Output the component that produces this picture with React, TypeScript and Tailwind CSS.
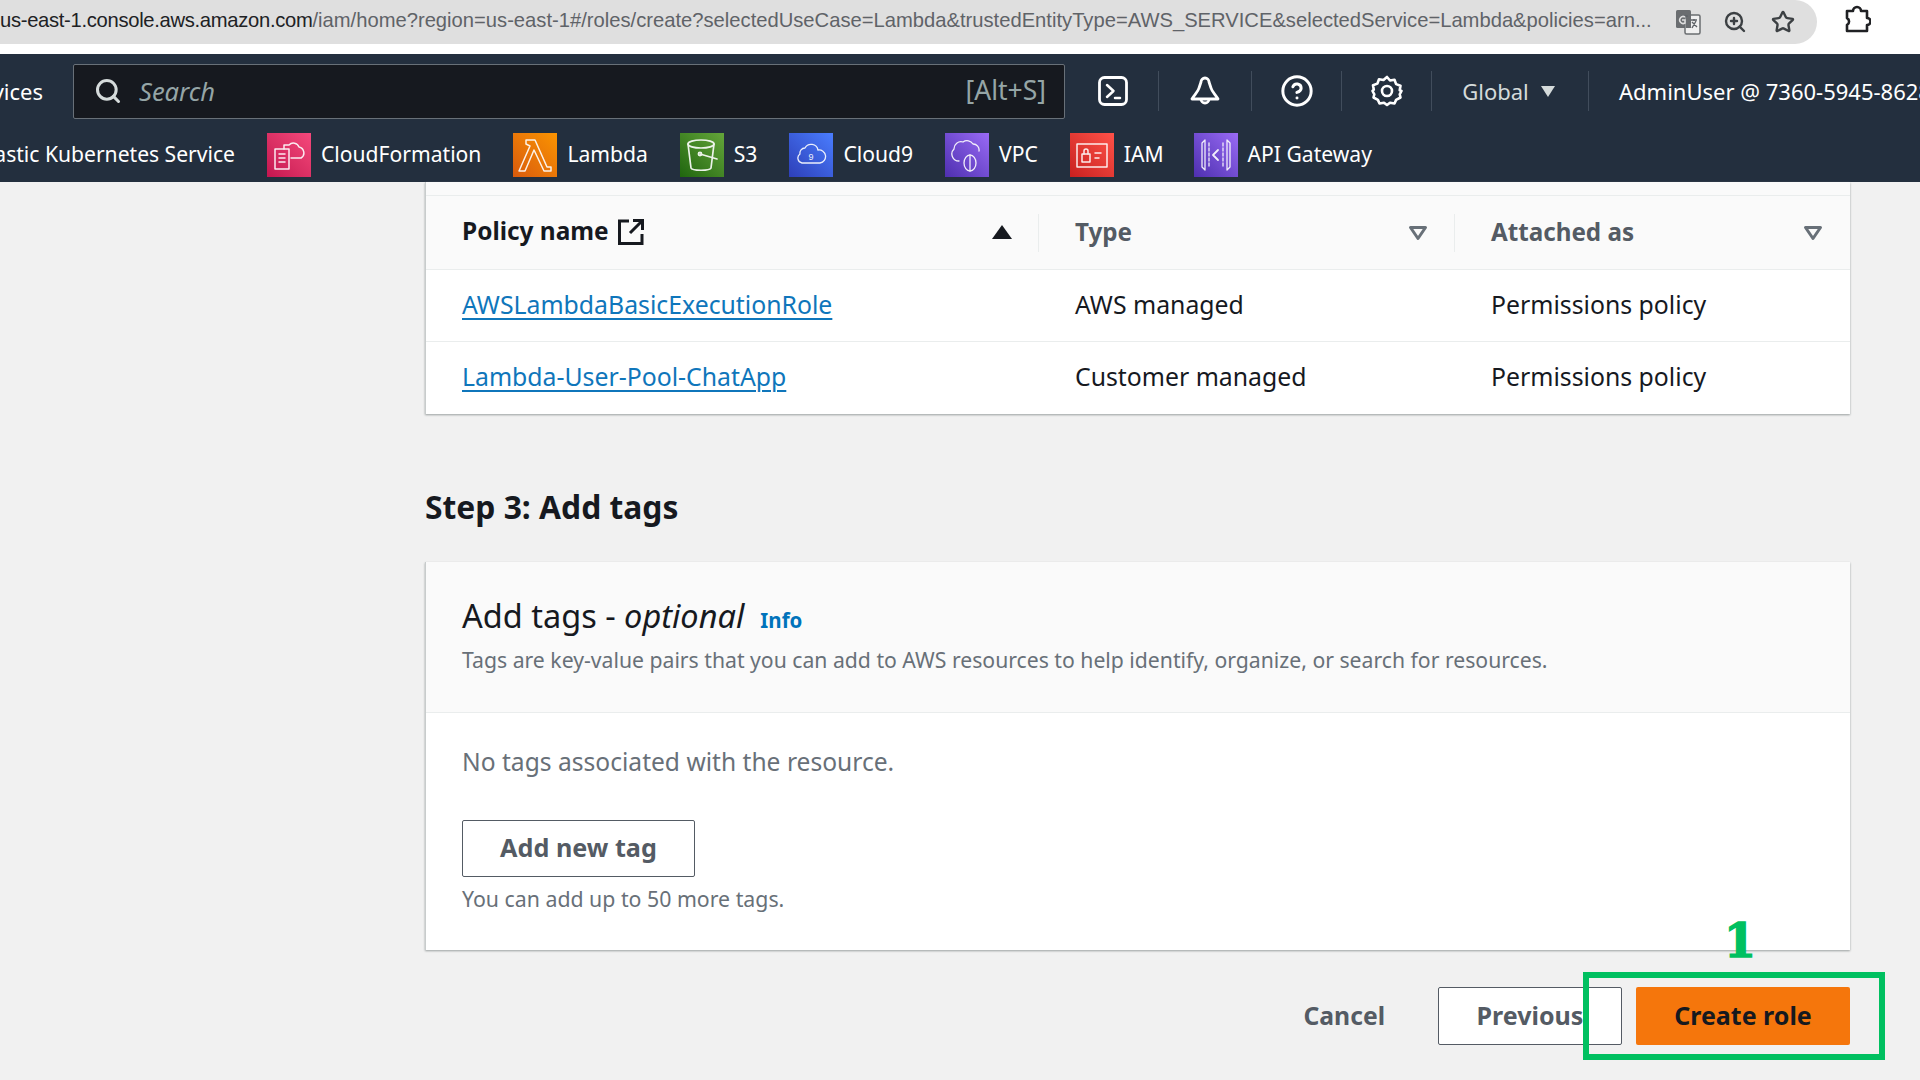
import React from 'react';
import { Search, Star, ZoomIn, CircleHelp } from 'lucide-react';

const services = [
  { name: 'CloudFormation', bg: 'bg-gradient-to-tr from-[#c4144f] to-[#f5487c]', icon: 'cf', gap: 'mr-[32px]' },
  { name: 'Lambda', bg: 'bg-gradient-to-tr from-[#d85a0c] to-[#fb9400]', icon: 'lambda', gap: 'mr-[32px]' },
  { name: 'S3', bg: 'bg-gradient-to-tr from-[#1f660e] to-[#64a63a]', icon: 's3', gap: 'mr-[32px]' },
  { name: 'Cloud9', bg: 'bg-gradient-to-tr from-[#2e3fb8] to-[#4a7dff]', icon: 'c9', gap: 'mr-[32px]' },
  { name: 'VPC', bg: 'bg-gradient-to-tr from-[#4f2fb0] to-[#9a6af5]', icon: 'vpc', gap: 'mr-[32px]' },
  { name: 'IAM', bg: 'bg-gradient-to-tr from-[#c81f1f] to-[#ff5148]', icon: 'iam', gap: 'mr-[30px]' },
  { name: 'API Gateway', bg: 'bg-gradient-to-tr from-[#4f2fb0] to-[#9a6af5]', icon: 'api', gap: '' },
];

const ServiceGlyph = ({ kind }: { kind: string }) => {
  const common = { fill: 'none', stroke: '#fff', strokeWidth: 1.3, strokeLinejoin: 'round' as const, strokeLinecap: 'round' as const };
  return (
    <svg viewBox="0 0 44 44" className="h-full w-full opacity-90">
      {kind === 'cf' && (
        <g {...common} strokeWidth={1.5}>
          <rect x="8" y="16" width="14" height="20" />
          <path d="M12 21h6M12 25h6M12 29h6" />
          <path d="M17 16v-4h5a6 6 0 0 1 10 2 6 6 0 0 1 2 11h-10" />
        </g>
      )}
      {kind === 'lambda' && (
        <path {...common} strokeWidth={1.5} d="M13 7h9l12 27h4v4h-7L21 17l-9 21H6l11-25-4-2z" />
      )}
      {kind === 's3' && (
        <g {...common} strokeWidth={1.7}>
          <ellipse cx="21" cy="11" rx="13" ry="4" />
          <path d="M8 11l3 24c1 3 19 3 20 0l3-24" />
          <path d="M20 21l17 5" />
          <circle cx="20" cy="21" r="1.6" />
        </g>
      )}
      {kind === 'c9' && (
        <g {...common}>
          <path d="M13 30a5 5 0 0 1-2-9 5 5 0 0 1 5-6 7 7 0 0 1 13 2 6 6 0 0 1 2 13z" />
          <text x="22" y="27" fontSize="9" fill="#fff" stroke="none" textAnchor="middle" fontFamily="Liberation Sans, sans-serif">9</text>
        </g>
      )}
      {kind === 'vpc' && (
        <g {...common}>
          <path d="M14 28a7 7 0 0 1-5-12 7 7 0 0 1 9-7 7 7 0 0 1 10 2 6 6 0 0 1 6 7" />
          <ellipse cx="25" cy="30" rx="6" ry="8" />
          <path d="M25 22v16" />
        </g>
      )}
      {kind === 'iam' && (
        <g {...common} strokeWidth={1.5}>
          <rect x="7" y="11" width="30" height="23" />
          <rect x="12" y="21" width="8" height="8" />
          <path d="M14 21v-3a2 2 0 0 1 4 0v3M25 20h6M25 25h4" />
        </g>
      )}
      {kind === 'api' && (
        <g {...common}>
          <path d="M11 7l-3 3v24l3 3zM33 7l3 3v24l-3 3z" />
          <path d="M15 10v24M29 10v24" strokeDasharray="3 2" />
          <path d="M24 17l-5 5 5 5" strokeWidth={1.8} />
        </g>
      )}
    </svg>
  );
};

const FilterCaret = () => (
  <svg viewBox="0 0 20 16" className="h-[16px] w-[20px]" fill="none" stroke="#687078" strokeWidth="3" strokeLinejoin="round">
    <path d="M2.5 2.5h15L10 13.5z" />
  </svg>
);

export default function App() {
  return (
    <div className="relative h-[1080px] w-[1920px] overflow-hidden bg-[#f1f1f1] font-['Noto_Sans',sans-serif] text-[#16191f]">
      {/* Browser address bar */}
      <div className="flex h-[54px] items-start bg-white">
        <div className="flex h-[44px] w-[1817px] shrink-0 items-center rounded-r-[22px] bg-[#dfdfdf] pr-[22px]">
          <div className="min-w-0 flex-1 overflow-hidden whitespace-nowrap pb-[3px] font-['Liberation_Sans',sans-serif] text-[20.2px] text-[#5f6368]">
            <span className="tracking-[-0.3px] text-[#202124]">us-east-1.console.aws.amazon.com</span>
            /iam/home?region=us-east-1#/roles/create?selectedUseCase=Lambda&amp;trustedEntityType=AWS_SERVICE&amp;selectedService=Lambda&amp;policies=arn...
          </div>
          <svg viewBox="0 0 26 26" className="ml-[22px] h-[26px] w-[26px] shrink-0">
            <rect x="1" y="1" width="15" height="18" rx="1.5" fill="#6a6d70" />
            <rect x="10" y="6" width="15" height="19" rx="1.5" fill="#f0f0f0" stroke="#6a6d70" strokeWidth="1.5" />
            <path d="M11 6h5v13h-5z" fill="#6a6d70" />
            <path d="M6 7h6v1M16 11h6M19 10v2M21 12l-4 7M17 13l5 5" fill="none" stroke="#5f6368" strokeWidth="1.4" />
            <path d="M10 8a3.500 3.500 0 1 0 0 6v-3H7" fill="none" stroke="#dfdfdf" strokeWidth="1.5" />
          </svg>
          <ZoomIn className="ml-[22px] h-[24px] w-[24px] shrink-0 text-[#3c4043]" strokeWidth={2.4} />
          <Star className="ml-[24px] h-[24px] w-[24px] shrink-0 text-[#3c4043]" strokeWidth={2.4} />
        </div>
        <svg viewBox="0 0 28 28" className="ml-[26px] mt-[5px] h-[28px] w-[28px] shrink-0" fill="none" stroke="#202124" strokeWidth="2.6" strokeLinejoin="round">
          <path d="M4 6h6a4 4 0 0 1 8 0h6v7a3.500 3.500 0 0 1 0 7v6H4v-6a4 4 0 0 0 0-7z" />
        </svg>
      </div>

      {/* AWS console nav */}
      <div className="h-[128px] bg-[#232f3e] text-white">
        <div className="flex h-[74px] items-center whitespace-nowrap">
          <div className="flex w-[73px] shrink-0 justify-end overflow-hidden pr-[30px] text-[22px]">
            <span className="shrink-0">Services</span>
          </div>
          <div className="flex h-[55px] w-[992px] shrink-0 items-center rounded-[2px] border border-[#687078] bg-[#16191f] pl-[20px] pr-[18px]">
            <Search className="h-[28px] w-[28px] text-[#d5dbdb]" strokeWidth={2.6} />
            <span className="ml-[17px] flex-1 text-[25.5px] italic text-[#95a5a6]">Search</span>
            <span className="text-[26.5px] text-[#95a5a6]">[Alt+S]</span>
          </div>
          <div className="flex w-[93px] shrink-0 justify-center pl-[3px]">
            <svg viewBox="0 0 30 30" className="h-[30px] w-[30px]" fill="none" stroke="#fff" strokeWidth="2.8" strokeLinecap="round" strokeLinejoin="round">
              <rect x="1.500" y="1.500" width="27" height="27" rx="5" />
              <path d="M9 9l6.500 6-6.500 6M17 22h5" strokeWidth="2.500" />
            </svg>
          </div>
          <div className="h-[40px] w-px shrink-0 bg-[#414d5c]" />
          <div className="flex w-[92px] shrink-0 justify-center">
            <svg viewBox="0 0 32 32" className="h-[32px] w-[32px]" fill="none" stroke="#fff" strokeWidth="2.8" strokeLinejoin="round">
              <path d="M16 3a4 4 0 0 1 4 4l2 6c1 4 5 7 7 11H3c2-4 6-7 7-11l2-6a4 4 0 0 1 4-4z" />
              <path d="M12 24a4 4 0 1 0 8 0" />
            </svg>
          </div>
          <div className="h-[40px] w-px shrink-0 bg-[#414d5c]" />
          <div className="flex w-[89px] shrink-0 justify-center">
            <CircleHelp className="h-[34px] w-[34px]" strokeWidth={2.1} />
          </div>
          <div className="h-[40px] w-px shrink-0 bg-[#414d5c]" />
          <div className="flex w-[89px] shrink-0 justify-center">
            <svg viewBox="0 0 32 32" className="h-[32px] w-[32px]" fill="none" stroke="#fff" strokeWidth="2.600" strokeLinejoin="round">
              <path d="M16 2l3 3.500 4.500-.8 1.600 4.400 4.400 1.600-.8 4.500L30.500 16 28.700 19.300l.8 3.200-4.400 2.400-1.600 3.600-4.500-.8L16 30l-3-2.300-4.500.8-1.600-3.600-4.400-2.400.8-3.200L1.500 16l1.300-1.300-.8-4.500 4.400-1.600 1.600-4.400 4.500.8z" />
              <circle cx="16" cy="16" r="5" />
            </svg>
          </div>
          <div className="h-[40px] w-px shrink-0 bg-[#414d5c]" />
          <div className="flex w-[156px] shrink-0 items-center justify-center gap-[12px] pr-[3px] text-[22px] text-[#d5dbdb]">
            Global
            <span className="h-0 w-0 border-x-[7px] border-t-[11px] border-x-transparent border-t-[#d5dbdb]" />
          </div>
          <div className="h-[40px] w-px shrink-0 bg-[#414d5c]" />
          <span className="ml-[30px] text-[22px]">AdminUser @ 7360-5945-8628</span>
        </div>
        <div className="flex h-[54px] items-center whitespace-nowrap text-[21.1px]">
          <div className="flex w-[267px] shrink-0 justify-end overflow-hidden pb-[3px] pr-[32px]">
            <span className="shrink-0">Elastic Kubernetes Service</span>
          </div>
          {services.map((s) => (
            <div key={s.name} className={`flex shrink-0 items-center ${s.gap}`}>
              <div className={`h-[44px] w-[44px] ${s.bg}`}>
                <ServiceGlyph kind={s.icon} />
              </div>
              <span className="ml-[10px] pb-[3px]">{s.name}</span>
            </div>
          ))}
        </div>
      </div>

      {/* Page content */}
      <div className="ml-[425px] w-[1425px]">
        {/* Policies table */}
        <div className="border-l border-[#c8cccc] bg-white shadow-[0_1px_2px_#9aa0a0]">
          <div className="h-[14px] border-b border-[#eaeded] bg-[#fafafa]" />
          <div className="flex h-[74px] items-center border-b border-[#eaeded] bg-[#fafafa] text-[24.2px] font-bold">
            <div className="flex w-[612px] items-center pl-[36px] pr-[26px]">
              <span className="pb-[2px] text-[24.4px]">Policy name</span>
              <svg viewBox="0 0 28 28" className="ml-[8px] h-[28px] w-[28px]" fill="none" stroke="#16191f" strokeWidth="3">
                <path d="M12 3H2.500v22.500H25V16M16 2.500h9.500V12M25 3L13 15" />
              </svg>
              <span className="ml-auto h-0 w-0 border-x-[10px] border-b-[14px] border-x-transparent border-b-[#16191f]" />
            </div>
            <div className="flex h-[38px] w-[416px] items-center justify-between border-l border-[#eaeded] pl-[36px] pr-[26px] text-[#545b64]">
              <span>Type</span>
              <FilterCaret />
            </div>
            <div className="flex h-[38px] flex-1 items-center justify-between border-l border-[#eaeded] pl-[36px] pr-[27px] text-[#545b64]">
              <span>Attached as</span>
              <FilterCaret />
            </div>
          </div>
          {[
            ['AWSLambdaBasicExecutionRole', 'AWS managed', 'Permissions policy'],
            ['Lambda-User-Pool-ChatApp', 'Customer managed', 'Permissions policy'],
          ].map(([name, type, attached], i) => (
            <div key={name} className={`flex h-[72px] items-center pb-[2px] text-[24.8px] text-[#16191f] ${i === 0 ? 'border-b border-[#eaeded]' : ''}`}>
              <div className="w-[612px] pl-[36px]">
                <a className="text-[#0f76bb] underline decoration-[2px] underline-offset-[4px]">{name}</a>
              </div>
              <div className="w-[416px] pl-[37px]">{type}</div>
              <div className="pl-[37px]">{attached}</div>
            </div>
          ))}
        </div>

        <h2 className="mb-[35px] mt-[73px] h-[40px] text-[31.8px] font-bold leading-[40px]">Step 3: Add tags</h2>

        {/* Add tags card */}
        <div className="h-[388px] border-l border-[#c8cccc] bg-white shadow-[0_1px_2px_#9aa0a0]">
          <div className="h-[151px] border-b border-[#eaeded] bg-[#fafafa] pl-[36px] pt-[32px]">
            <div className="flex items-baseline">
              <span className="text-[32.500px] leading-[44px]">Add tags - <i>optional</i></span>
              <span className="ml-[16px] text-[20.5px] font-bold text-[#0073bb]">Info</span>
            </div>
            <p className="mt-[6px] text-[21.2px] text-[#687078]">Tags are key-value pairs that you can add to AWS resources to help identify, organize, or search for resources.</p>
          </div>
          <div className="pl-[36px] pt-[31px]">
            <p className="text-[24.6px] text-[#687078]">No tags associated with the resource.</p>
            <button className="mt-[39px] flex h-[57px] w-[233px] items-center justify-center rounded-[2px] border border-[#545b64] bg-white text-[25.2px] font-bold text-[#545b64]">Add new tag</button>
            <p className="mt-[6px] text-[21.3px] text-[#687078]">You can add up to 50 more tags.</p>
          </div>
        </div>

        {/* Footer actions */}
        <div className="mt-[37px] flex items-center justify-end">
          <span className="mr-[53px] text-[24.7px] font-bold text-[#545b64]">Cancel</span>
          <button className="flex h-[58px] w-[184px] items-center justify-center rounded-[2px] border border-[#545b64] bg-white text-[25px] font-bold text-[#545b64]">Previous</button>
          <button className="ml-[14px] flex h-[58px] w-[214px] items-center justify-center rounded-[2px] bg-[#f5760c] text-[25px] font-bold text-[#16191f]">Create role</button>
        </div>
      </div>

      {/* Green annotation over the screenshot */}
      <div className="absolute left-[1583px] top-[972px] h-[88px] w-[302px] border-[6px] border-[#00c060]" />
      <span className="absolute left-[1724px] top-[909px] font-['DejaVu_Serif',serif] text-[46px] font-bold leading-[64px] text-[#00c060] [-webkit-text-stroke:1.5px_#00c060]">1</span>
    </div>
  );
}
